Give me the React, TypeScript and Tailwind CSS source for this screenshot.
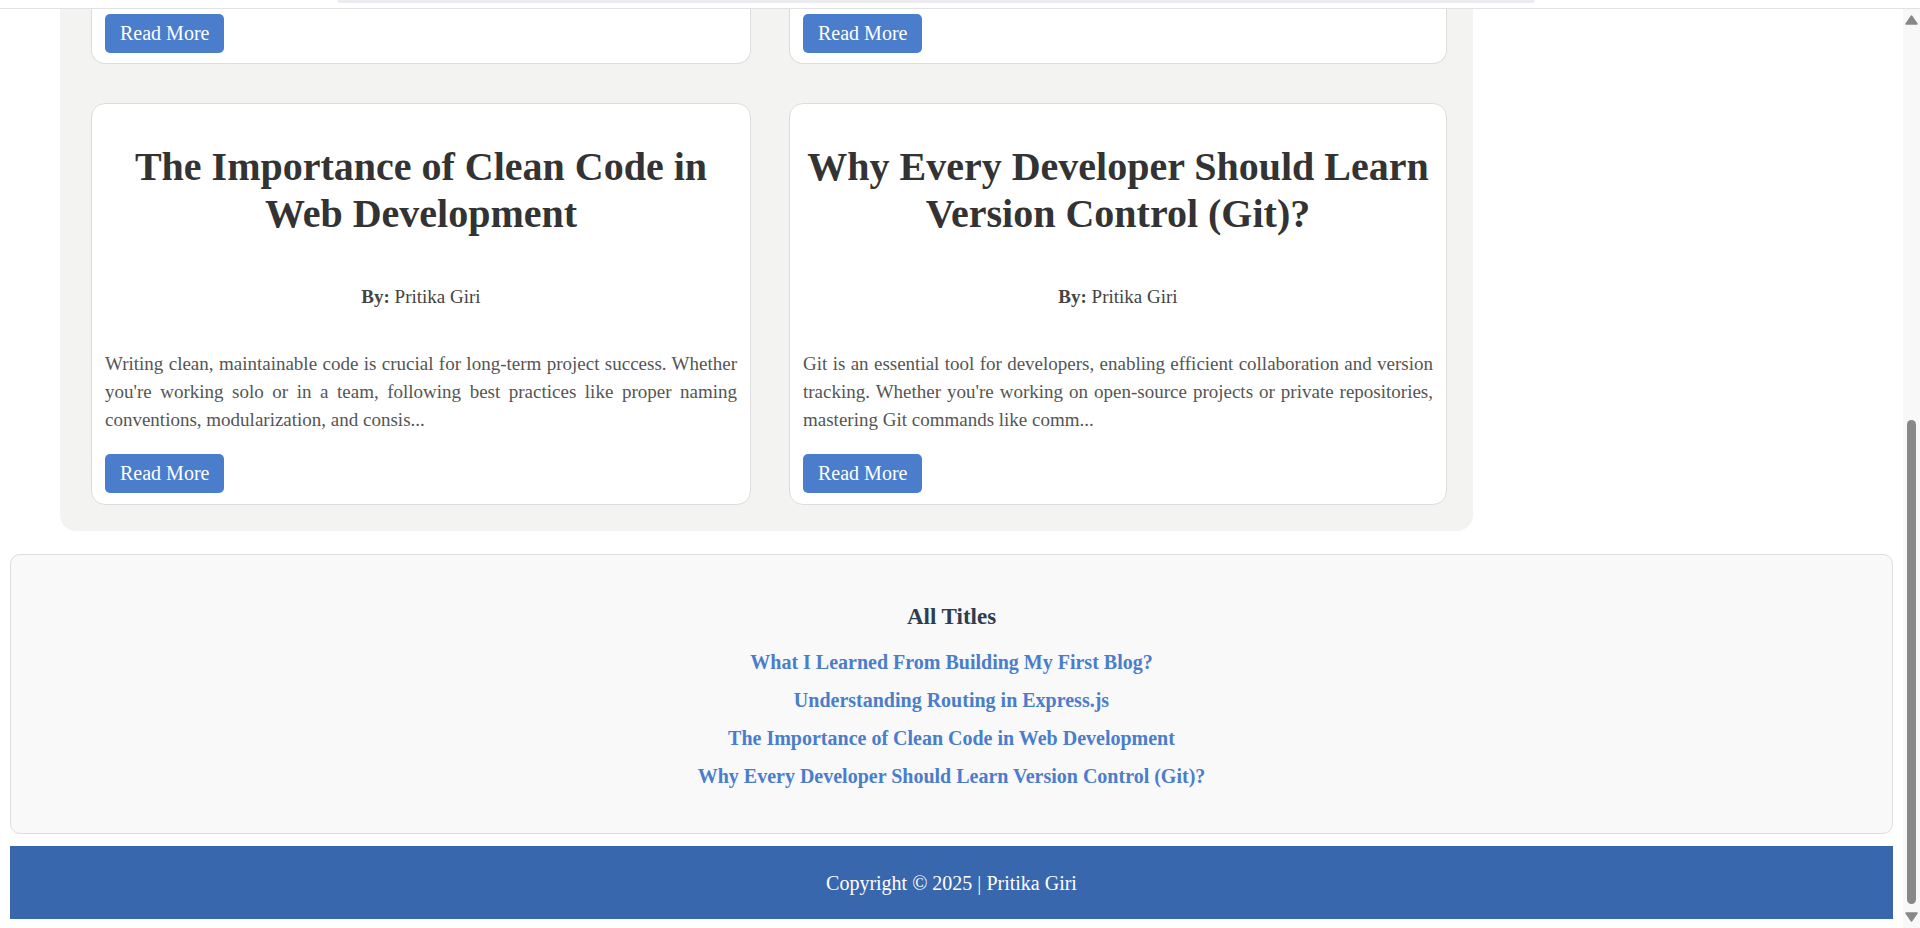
import React from 'react'

const posts = [
  {
    title: 'The Importance of Clean Code in Web Development',
    excerpt:
      "Writing clean, maintainable code is crucial for long-term project success. Whether you're working solo or in a team, following best practices like proper naming conventions, modularization, and consis...",
  },
  {
    title: 'Why Every Developer Should Learn Version Control (Git)?',
    excerpt:
      "Git is an essential tool for developers, enabling efficient collaboration and version tracking. Whether you're working on open-source projects or private repositories, mastering Git commands like comm...",
  },
]

const allTitles = [
  'What I Learned From Building My First Blog?',
  'Understanding Routing in Express.js',
  'The Importance of Clean Code in Web Development',
  'Why Every Developer Should Learn Version Control (Git)?',
]

const ReadMore = () => (
  <button className="self-start rounded-[5px] bg-[#4a7dcb] px-[15px] py-2 text-[20px] leading-[23px] text-white">
    Read More
  </button>
)

const Scrollbar = () => (
  <div className="flex w-[17px] flex-col items-center bg-[#f8f8f8]">
    <svg width="13" height="10" viewBox="0 0 13 10" className="mt-[6px]">
      <path d="M6.5 1 L12 9 L1 9 Z" fill="#888" stroke="#888" strokeLinejoin="round" strokeWidth="1.5" />
    </svg>
    <div className="mt-[395px] h-[484px] w-[9px] rounded-full bg-[#888]" />
    <svg width="13" height="10" viewBox="0 0 13 10" className="mt-[8px]">
      <path d="M1 1 L12 1 L6.5 9 Z" fill="#888" stroke="#888" strokeLinejoin="round" strokeWidth="1.5" />
    </svg>
  </div>
)

const widths = ['w-[660px]', 'w-[658px]']

const App = () => {
  return (
    <div className="flex h-[928px] w-[1920px] flex-col overflow-hidden bg-white font-['Liberation_Serif',serif]">
      {/* top bar, scrolled off */}
      <div className="h-[9px] shrink-0 border-b border-[#e2e2e2]">
        <div className="ml-[337px] h-[3px] w-[1198px] rounded-b-[8px] bg-[#ececf0]" />
      </div>

      <div className="flex flex-1">
        <div className="flex w-[1903px] flex-col">
          {/* posts */}
          <div className="ml-[60px] w-[1413px] rounded-b-[16px] bg-[#f3f3f2] pb-[26px] pl-[31px] pr-[26px]">
            <div className="flex gap-[38px]">
              {[0, 1].map((i) => (
                <div
                  key={i}
                  className={`flex h-[55px] flex-col rounded-b-[14px] border-x border-b border-[#dddddd] bg-white px-[13px] pt-[5px] ${widths[i]}`}
                >
                  <ReadMore />
                </div>
              ))}
            </div>
            <div className="mt-[39px] flex gap-[38px]">
              {posts.map((p, i) => (
                <div
                  key={p.title}
                  className={`flex h-[402px] flex-col rounded-[14px] border border-[#dddddd] bg-white px-[13px] pt-[39px] ${widths[i]}`}
                >
                  <h2 className="text-center text-[40px] font-bold leading-[47px] text-[#333333]">{p.title}</h2>
                  <p className="mt-[49px] text-center text-[19px] leading-[22px] text-[#444444]">
                    <b>By:</b> Pritika Giri
                  </p>
                  <p className="mt-[42px] text-justify text-[19px] leading-[28px] text-[#555555]">{p.excerpt}</p>
                  <div className="mt-[20px] flex">
                    <ReadMore />
                  </div>
                </div>
              ))}
            </div>
          </div>

          {/* all titles */}
          <div className="mx-[10px] mt-[23px] flex h-[280px] flex-col items-center rounded-[10px] border border-[#dddddd] bg-[#f9f9f9] pt-[49px]">
            <h3 className="text-[23px] font-bold leading-[26px] text-[#2c3e50]">All Titles</h3>
            <ul className="mt-[21px] flex flex-col items-center gap-[15px]">
              {allTitles.map((t) => (
                <li key={t} className="text-[20px] font-bold leading-[23px] text-[#4a7dcb]">
                  <a>{t}</a>
                </li>
              ))}
            </ul>
          </div>

          {/* footer */}
          <footer className="mx-[10px] mt-[12px] flex h-[73px] items-center justify-center bg-[#3867ae] text-[20px] text-white">
            Copyright © 2025 | Pritika Giri
          </footer>
        </div>
        <Scrollbar />
      </div>
    </div>
  )
}

export default App
